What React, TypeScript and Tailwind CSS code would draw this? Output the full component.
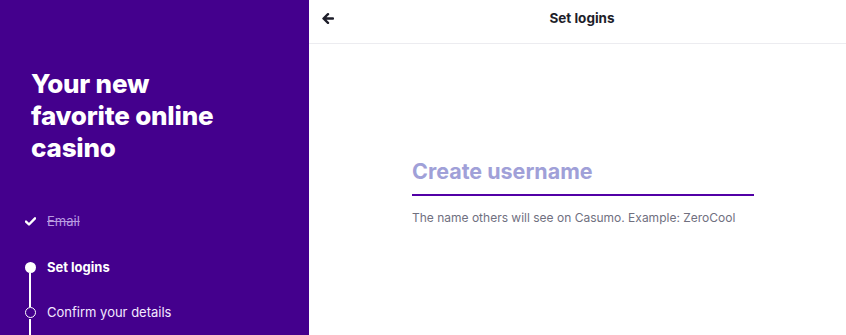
import React from "react";

const font = { fontFamily: "Inter, 'Noto Sans', sans-serif" };

function Check() {
  return (
    <svg width="11" height="9" viewBox="0 0 11 9" fill="none">
      <path d="M1 4.6 L4 7.5 L10 1.3" stroke="white" strokeWidth="2.4" strokeLinecap="round" strokeLinejoin="round" />
    </svg>
  );
}

function BackArrow() {
  return (
    <svg width="12" height="11" viewBox="0 0 12 11" fill="none">
      <path d="M11 5.5 H2.5 M6 1.2 L1.5 5.5 L6 9.8" stroke="#1e1e2a" strokeWidth="2.4" strokeLinecap="round" strokeLinejoin="round" />
    </svg>
  );
}

type Step = { label: string; state: "done" | "current" | "todo"; lineAbove: boolean; lineBelow: boolean };

const steps: Step[] = [
  { label: "Email", state: "done", lineAbove: false, lineBelow: false },
  { label: "Set logins", state: "current", lineAbove: false, lineBelow: true },
  { label: "Confirm your details", state: "todo", lineAbove: true, lineBelow: true },
];

function StepRow({ step }: { step: Step }) {
  return (
    <div className="flex h-[45.5px] items-stretch">
      <div className="flex w-[14px] flex-col items-center">
        <div className={`w-[2px] flex-1 ${step.lineAbove ? "bg-white" : ""}`} />
        <div className="flex h-[12px] w-[14px] items-center justify-center">
          {step.state === "done" && <Check />}
          {step.state === "current" && <div className="h-[11px] w-[11px] rounded-full bg-white" />}
          {step.state === "todo" && <div className="h-[11px] w-[11px] rounded-full border-[1.5px] border-white" />}
        </div>
        <div className={`w-[2px] flex-1 ${step.lineBelow ? "bg-white" : ""}`} />
      </div>
      <div className="ml-[10px] flex items-center">
        {step.state === "done" && (
          <span className="text-[13px] text-[#b89ae0] line-through">{step.label}</span>
        )}
        {step.state === "current" && (
          <span className="text-[13px] font-bold text-white">{step.label}</span>
        )}
        {step.state === "todo" && (
          <span className="text-[13px] text-[#f3e9ff]">{step.label}</span>
        )}
      </div>
    </div>
  );
}

export default function App() {
  return (
    <div className="flex h-[335px] w-[846px] overflow-hidden bg-white" style={font}>
      {/* left intro panel */}
      <div className="flex w-[309px] shrink-0 flex-col bg-[#44008d] pl-[23px] pt-[68px]">
        <h1 className="ml-[8px] text-[26px] font-extrabold leading-[32px] tracking-[-0.2px] text-white">
          Your new
          <br />
          favorite online
          <br />
          casino
        </h1>
        <div className="mt-[35px] flex flex-1 flex-col">
          {steps.map((s) => (
            <StepRow key={s.label} step={s} />
          ))}
        </div>
      </div>

      {/* right form panel */}
      <div className="flex flex-1 flex-col">
        <div className="flex h-[44px] items-center border-b border-[#ececf0] pb-[7px] pl-[13px] pr-[16px]">
          <BackArrow />
          <div className="flex-1 text-center text-[13.5px] font-bold text-[#1e1e2a]">Set logins</div>
        </div>
        <div className="ml-[103px] mt-[113px] w-[342px]">
          <div className="border-b-2 border-[#5200a6] pb-[9px] text-[21.5px] font-bold leading-[28px] text-[#a0a0d8]">
            Create username
          </div>
          <p className="mt-[13px] text-[12px] text-[#70707f]">
            The name others will see on Casumo. Example: ZeroCool
          </p>
        </div>
      </div>
    </div>
  );
}
